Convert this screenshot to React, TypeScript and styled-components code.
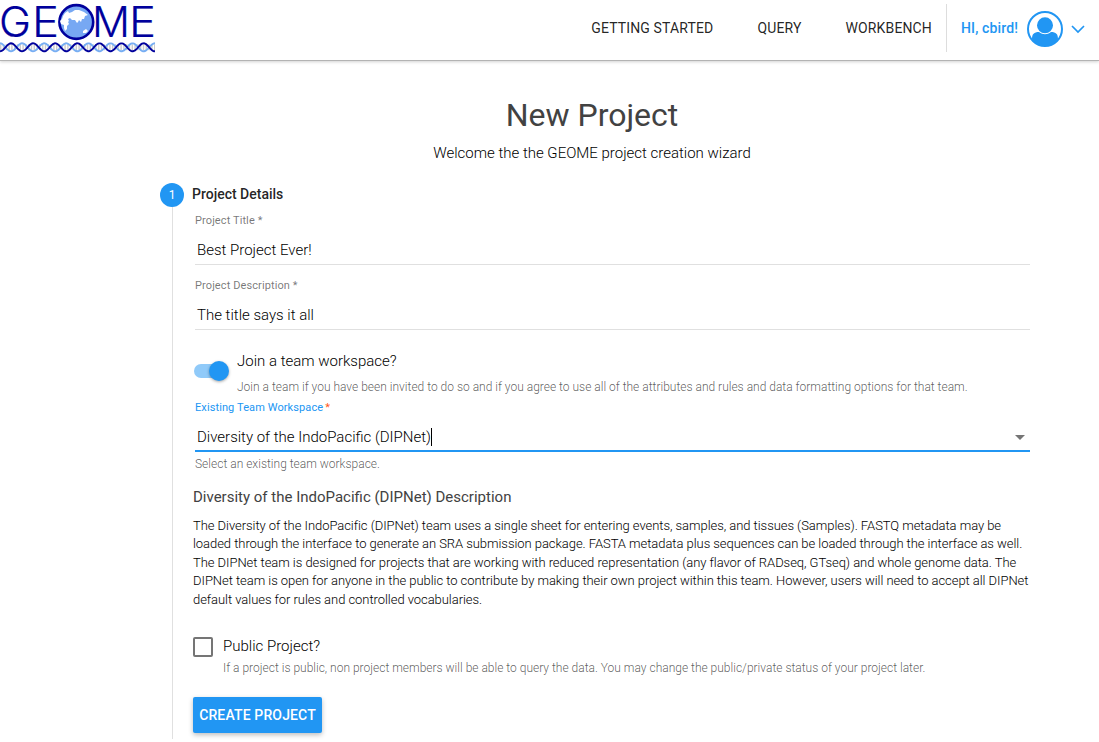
import React from 'react';
import styled, { createGlobalStyle } from 'styled-components';

const Global = createGlobalStyle`
  * { box-sizing: border-box; }
  body { margin: 0; background: #fff; font-family: Roboto, "Liberation Sans", sans-serif; color: rgba(0,0,0,.87); overflow: hidden; }
  h1, h2, h3, p { margin: 0; }
`;
const Page = styled.div`height: 742px; overflow: hidden; display: flex; flex-direction: column;`;
const Header = styled.header`
  height: 61px; flex: none; display: flex; border-bottom: 1px solid #b3b3b3;
  box-shadow: 0 1px 3px rgba(0,0,0,.18);
`;
const Nav = styled.nav`margin-left: auto; display: flex; height: 56px; padding-top: 4px;`;
const NavLink = styled.a<{ $gap: number }>`
  font-size: 14px; line-height: 48px; margin-right: ${p => p.$gap}px; white-space: nowrap; letter-spacing: .14px;
`;
const User = styled.div`
  height: 48px; width: 153px; border-left: 1px solid #ddd; padding-left: 14px;
  display: flex; align-items: center; color: #2196f3; font-size: 14px; font-weight: 500;
  svg { flex: none; margin-top: 2px; }
`;
const UserName = styled.span`width: 66px; white-space: nowrap; letter-spacing: .15px;`;
const Chevron = styled.svg`margin-left: 8px;`;
const Intro = styled.section`display: flex; flex-direction: column; align-items: center; padding-top: 34px; padding-left: 85px;`;
const Title = styled.h1`font-size: 32px; font-weight: 400; line-height: 40px; color: #424242;`;
const Subtitle = styled.p`font-size: 15px; font-weight: 300; line-height: 20px; margin-top: 8px; color: #000;`;
const Wizard = styled.main`display: flex; margin: 20px 0 0 160px; height: 556px;`;
const Rail = styled.div`
  width: 24px; display: flex; flex-direction: column; align-items: center;
  &::after { content: ''; width: 1px; flex: 1; background: #e0e0e0; }
`;
const StepNumber = styled.span`
  width: 24px; height: 24px; border-radius: 50%; background: #2196f3; color: #fff;
  font-size: 12px; line-height: 24px; text-align: center;
`;
const Step = styled.section`width: 846px; padding-left: 9px;`;
const StepTitle = styled.h2`font-size: 14px; font-weight: 500; line-height: 22px; margin: 0 0 8px -1px;`;
const Field = styled.div<{ $active?: boolean }>`
  height: 52px; margin-left: 2px; width: 835px;
  border-bottom: ${p => (p.$active ? '2px solid #2196f3' : '1px solid #e0e0e0')};
  & + & { margin-top: 13px; }
`;
const Label = styled.label<{ $active?: boolean }>`
  display: block; font-size: 11px; line-height: 16px; letter-spacing: .1px;
  color: ${p => (p.$active ? '#2196f3' : 'rgba(0,0,0,.54)')};
`;
const Star = styled.span`color: #ff5722; margin-left: 2px;`;
const Value = styled.div`
  display: flex; align-items: center; height: 28px; margin-top: 7px; padding: 0 5px 0 2px;
  font-size: 15px; font-weight: 300; white-space: nowrap; color: #000;
`;
const Caret = styled.i`width: 1px; height: 18px; background: #000;`;
const Arrow = styled.i`
  margin-left: auto; border: 5px solid transparent; border-top-color: #757575; border-bottom: 0;
`;
const Hint = styled.p`
  font-size: 12px; font-weight: 300; line-height: 16px; color: rgba(0,0,0,.65); white-space: nowrap;
`;
const FieldHint = styled(Hint)`margin: 4px 0 0 2px;`;
const Option = styled.div<{ $gap: number; $top: number; $bottom: number; $hint: number }>`
  display: flex; gap: ${p => p.$gap}px; margin: ${p => p.$top}px 0 ${p => p.$bottom}px;
  ${Hint} { margin-top: ${p => p.$hint}px; }
`;
const OptionText = styled.div``;
const OptionTitle = styled.p`font-size: 15px; font-weight: 300; line-height: 20px; color: #000;`;
const Track = styled.div`
  width: 34px; height: 14px; margin: 13px 0 0 1px; border-radius: 7px; background: #90caf9; flex: none;
  display: flex; align-items: center; justify-content: flex-end;
`;
const Thumb = styled.i`
  width: 20px; height: 20px; margin-right: -1px; border-radius: 50%; background: #2196f3; flex: none;
  box-shadow: 0 1px 3px rgba(0,0,0,.35);
`;
const Checkbox = styled.i`width: 20px; height: 20px; margin-top: 1px; border: 2px solid #757575; border-radius: 2px; flex: none;`;
const DescTitle = styled.h3`font-size: 15px; font-weight: 400; line-height: 20px; margin-top: 15px; color: #424242;`;
const Desc = styled.p`font-size: 13px; font-weight: 300; line-height: 18.5px; margin-top: 9.6px; white-space: nowrap; color: #000; letter-spacing: -.05px;`;
const Line = styled.span`display: block;`;
const Button = styled.button`
  display: block; width: 129px; height: 36px; padding: 0; border: 0; border-radius: 2px;
  background: #2196f3; color: #fff; font: 500 14px/36px Roboto, sans-serif; white-space: nowrap; letter-spacing: .14px;
  box-shadow: 0 2px 5px rgba(0,0,0,.26);
`;
const LogoSvg = styled.svg`overflow: visible; flex: none;`;

const wave = (phase: number) =>
  Array.from({ length: 156 }, (_, x) => `${x ? 'L' : 'M'}${x} ${(47.3 + 4 * Math.sin((x / 22.1) * Math.PI * 2 + phase)).toFixed(2)}`).join('');

const Logo = () => (
  <LogoSvg width="155" height="56" viewBox="0 0 155 56">
    <g fill="#00009c" stroke="#00009c" strokeWidth=".2" fontFamily="Inter" fontWeight="300" fontSize="42">
      <text x="-1" y="37.3" textLength="32" lengthAdjust="spacingAndGlyphs">G</text>
      <text x="32" y="37.3" textLength="27" lengthAdjust="spacingAndGlyphs">E</text>
      <text x="92" y="37.3" textLength="38" lengthAdjust="spacingAndGlyphs">M</text>
      <text x="129" y="37.3" textLength="27" lengthAdjust="spacingAndGlyphs">E</text>
    </g>
    <circle cx="76.3" cy="22" r="16.9" fill="#77a8f3" stroke="#00009c" strokeWidth="2.6" />
    <path fill="#fff" d="M63 16l2-3 3-2 1 2 3-1 3-2 4 0 5 2 4 3-3 1-1 3-2 0-1 3-2-2-1 2-1 1-2-3-3 0-2-2-2 1 1 2-1 1 1 2-2 2 0 3-2 2-1-3 0-3-3-1-1-3 2-2zM83 31l3-2 2 2-2 2-3 0z" />
    <path d="M0 47.3H155" stroke="#ccc" strokeWidth="6" strokeDasharray="1.4 1.4" />
    <path d={wave(-Math.PI / 2)} fill="none" stroke="#77aef3" strokeWidth="1.9" />
    <path d={wave(Math.PI / 2)} fill="none" stroke="#00009c" strokeWidth="1.9" />
  </LogoSvg>
);

export default function App() {
  return (
    <Page>
      <Global />
      <Header>
        <Logo />
        <Nav>
          <NavLink $gap={44}>GETTING STARTED</NavLink>
          <NavLink $gap={44}>QUERY</NavLink>
          <NavLink $gap={14}>WORKBENCH</NavLink>
          <User>
            <UserName>HI, cbird!</UserName>
            <svg width="36" height="36" viewBox="0 0 36 36">
              <circle cx="18" cy="18" r="17" fill="none" stroke="#2196f3" strokeWidth="2" />
              <circle cx="18" cy="14.3" r="8" fill="#2196f3" />
              <path fill="#2196f3" d="M5 28c0-5 2-7 7-7 4 3 8 3 12 0 5 0 7 2 7 7-3 5-8 7-13 7s-10-2-13-7z" />
            </svg>
            <Chevron width="14" height="10" viewBox="0 0 14 10">
              <path d="M1 2l6 6 6-6" fill="none" stroke="#2196f3" strokeWidth="1.7" />
            </Chevron>
          </User>
        </Nav>
      </Header>
      <Intro>
        <Title>New Project</Title>
        <Subtitle>Welcome the the GEOME project creation wizard</Subtitle>
      </Intro>
      <Wizard>
        <Rail><StepNumber>1</StepNumber></Rail>
        <Step>
          <StepTitle>Project Details</StepTitle>
          <Field><Label>Project Title *</Label><Value>Best Project Ever!</Value></Field>
          <Field><Label>Project Description *</Label><Value>The title says it all</Value></Field>
          <Option $gap={9} $top={21} $bottom={5} $hint={8}>
            <Track><Thumb /></Track>
            <OptionText>
              <OptionTitle>Join a team workspace?</OptionTitle>
              <Hint>Join a team if you have been invited to do so and if you agree to use all of the attributes and rules and data formatting options for that team.</Hint>
            </OptionText>
          </Option>
          <Field $active>
            <Label $active>Existing Team Workspace<Star>*</Star></Label>
            <Value>Diversity of the IndoPacific (DIPNet)<Caret /><Arrow /></Value>
          </Field>
          <FieldHint>Select an existing team workspace.</FieldHint>
          <DescTitle>Diversity of the IndoPacific (DIPNet) Description</DescTitle>
          <Desc>
            <Line>The Diversity of the IndoPacific (DIPNet) team uses a single sheet for entering events, samples, and tissues (Samples). FASTQ metadata may be</Line>
            <Line>loaded through the interface to generate an SRA submission package. FASTA metadata plus sequences can be loaded through the interface as well.</Line>
            <Line>The DIPNet team is designed for projects that are working with reduced representation (any flavor of RADseq, GTseq) and whole genome data. The</Line>
            <Line>DIPNet team is open for anyone in the public to contribute by making their own project within this team. However, users will need to accept all DIPNet</Line>
            <Line>default values for rules and controlled vocabularies.</Line>
          </Desc>
          <Option $gap={10} $top={26.9} $bottom={21} $hint={4}>
            <Checkbox />
            <OptionText>
              <OptionTitle>Public Project?</OptionTitle>
              <Hint>If a project is public, non project members will be able to query the data. You may change the public/private status of your project later.</Hint>
            </OptionText>
          </Option>
          <Button>CREATE PROJECT</Button>
        </Step>
      </Wizard>
    </Page>
  );
}
